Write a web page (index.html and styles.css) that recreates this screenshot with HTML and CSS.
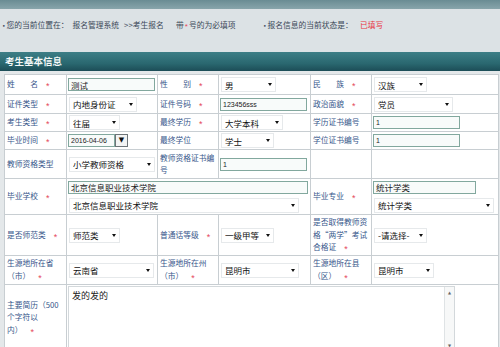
FILE: index.html
```html
<!DOCTYPE html>
<html lang="zh-CN">
<head>
<meta charset="utf-8">
<title>考生基本信息</title>
<link rel="stylesheet" href="styles.css">
</head>
<body>
<div class="topbar"></div>
<div class="crumbs">
  <span class="c1"><b class="dot">•</b>您的当前位置在：<span class="sys">报名管理系统</span><span class="sub">&gt;&gt;考生报名</span></span>
  <span class="c2">带<i class="rq sm">*</i>号的为必填项</span>
  <span class="c3"><b class="dot">•</b>报名信息的当前状态是：</span>
  <span class="state">已填写</span>
</div>
<div class="head">考生基本信息</div>
<table class="form">
  <colgroup>
    <col class="k1"><col class="v1"><col class="k2"><col class="v2"><col class="k3"><col class="v3">
  </colgroup>
  <tr class="h20">
    <th><span class="lb">姓名</span><i class="rq">*</i></th>
    <td><input class="inp w87" value="测试"></td>
    <th><span class="lb">性别</span><i class="rq">*</i></th>
    <td><span class="sel w55"><select><option>男</option></select></span></td>
    <th><span class="lb">民族</span><i class="rq">*</i></th>
    <td><span class="sel w53"><select><option>汉族</option></select></span></td>
  </tr>
  <tr class="h19">
    <th><span class="lb">证件类型</span><i class="rq">*</i></th>
    <td><span class="sel w68"><select><option>内地身份证</option></select></span></td>
    <th><span class="lb">证件号码</span><i class="rq">*</i></th>
    <td><input class="inp w87 n" value="123456sss"></td>
    <th><span class="lb">政治面貌</span><i class="rq">*</i></th>
    <td><span class="sel w79"><select><option>党员</option></select></span></td>
  </tr>
  <tr class="h18">
    <th><span class="lb">考生类型</span><i class="rq">*</i></th>
    <td><span class="sel w51"><select><option>往届</option></select></span></td>
    <th><span class="lb">最终学历</span><i class="rq">*</i></th>
    <td><span class="sel w62"><select><option>大学本科</option></select></span></td>
    <th>学历证书编号</th>
    <td><input class="inp w87 n" value="1"></td>
  </tr>
  <tr class="h18">
    <th><span class="lb">毕业时间</span><i class="rq">*</i></th>
    <td><span class="date"><input class="inp w47 n" value="2016-04-06"><span class="dbtn">▼</span></span></td>
    <th>最终学位</th>
    <td><span class="sel w53"><select><option>学士</option></select></span></td>
    <th>学位证书编号</th>
    <td><input class="inp w87 n" value="1"></td>
  </tr>
  <tr class="h29">
    <th>教师资格类型</th>
    <td><span class="sel w86"><select><option>小学教师资格</option></select></span></td>
    <th>教师资格证书编<br>号</th>
    <td><input class="inp w87 n" value="1"></td>
    <th></th>
    <td></td>
  </tr>
  <tr class="h36">
    <th><span class="lb">毕业学校</span><i class="rq">*</i></th>
    <td colspan="3">
      <div class="stack">
        <input class="inp w240" value="北京信息职业技术学院">
        <span class="sel w230"><select><option>北京信息职业技术学院</option></select></span>
      </div>
    </td>
    <th><span class="lb">毕业专业</span><i class="rq">*</i></th>
    <td>
      <div class="stack">
        <input class="inp w103" value="统计学类">
        <span class="sel w120"><select><option>统计学类</option></select></span>
      </div>
    </td>
  </tr>
  <tr class="h41">
    <th>是否师范类<i class="rq">*</i></th>
    <td><span class="sel w51"><select><option>师范类</option></select></span></td>
    <th>普通话等级<i class="rq">*</i></th>
    <td><span class="sel w53"><select><option>一级甲等</option></select></span></td>
    <th>是否取得教师资<br>格“两学”考试<br>合格证<i class="rq">*</i></th>
    <td><span class="sel w53"><select><option>-请选择-</option></select></span></td>
  </tr>
  <tr class="h29">
    <th>生源地所在省<br>（市）<i class="rq">*</i></th>
    <td><span class="sel w85"><select><option>云南省</option></select></span></td>
    <th>生源地所在州<br>（市）<i class="rq">*</i></th>
    <td><span class="sel w78"><select><option>昆明市</option></select></span></td>
    <th>生源地所在县<br>（区）<i class="rq">*</i></th>
    <td><span class="sel w60"><select><option>昆明市</option></select></span></td>
  </tr>
  <tr class="h66">
    <th>主要简历（500<br>个字符以<br>内）<i class="rq">*</i></th>
    <td colspan="5" class="tacell">
      <div class="ta">
        <textarea>发的发的</textarea>
        <div class="sb"><span class="arr">▲</span><span class="arr">▼</span></div>
      </div>
    </td>
  </tr>
</table>
</body>
</html>
```
FILE: styles.css
```css
html { overflow: hidden; }
body {
  margin: 0;
  background: #e4e8ea;
  font-family: "Noto Sans CJK SC", "Noto Sans", sans-serif;
  color: #222;
}
.topbar {
  height: 9px;
  background: linear-gradient(#6a8c93, #88a5ab);
}
.crumbs {
  display: flex;
  height: 43px;
  box-sizing: border-box;
  padding: 10px 0 0 2px;
  background: #dce2e5;
  font-size: 7.75px;
  line-height: 12px;
  color: #3b4858;
  white-space: nowrap;
}
.dot {
  font-weight: normal;
  font-family: "DejaVu Sans", sans-serif;
  font-size: 6px;
  margin-right: 1px;
}
.c1 { width: 174px; }
.sys { margin-left: 4px; }
.sub { margin-left: 5px; }
.c2 { width: 87px; }
.c3 { width: 97px; }
.state { color: #e8353e; }
.head {
  height: 19px;
  line-height: 19px;
  padding-left: 5px;
  background: linear-gradient(#3d7e86, #2a6870 60%, #1c4d57);
  color: #f4f8f8;
  font-size: 9.5px;
  font-weight: bold;
}
.form {
  margin: 3px 0 0 4px;
  width: 494px;
  table-layout: fixed;
  border-collapse: collapse;
  background: #fff;
  font-size: 8px;
  line-height: 12px;
}
.k1 { width: 62px; }
.v1 { width: 91px; }
.k2 { width: 61px; }
.v2 { width: 92px; }
.k3 { width: 61px; }
.v3 { width: 127px; }
.form th, .form td {
  border: 1px solid #c8ced2;
  vertical-align: middle;
}
.form th {
  padding: 0 1px 0 2px;
  text-align: left;
  font-weight: normal;
  font-size: 7.75px;
  line-height: 12.5px;
  color: #36568a;
  white-space: nowrap;
}
.form td {
  padding: 0 1px 0 1px;
  white-space: nowrap;
  font-size: 8px;
  line-height: 10px;
}
.h20 { height: 20px; }
.h19 { height: 19px; }
.h18 { height: 18px; }
.h29 { height: 29px; }
.h36 { height: 36px; }
.h41 { height: 41px; }
.h66 { height: 66px; }
.lb {
  display: inline-block;
  width: 31px;
  text-align-last: justify;
}
.rq {
  font-style: normal;
  font-family: "Liberation Sans", sans-serif;
  font-size: 9px;
  color: #e5475c;
  margin-left: 8px;
  vertical-align: -2px;
  line-height: 1;
}
.rq.sm { margin: 0 1px; font-size: 8px; vertical-align: -1px; }
.inp {
  box-sizing: border-box;
  height: 13px;
  margin: 0;
  padding: 0 2px;
  border: 1px solid #82a89e;
  background: #f8fbfa;
  font-family: "Noto Sans CJK SC", sans-serif;
  font-size: 8.5px;
  color: #222;
  vertical-align: middle;
  outline: none;
}
.inp.n { font-size: 7px; font-family: "Liberation Sans", sans-serif; }
.w47 { width: 47px; }
.w51 { width: 51px; }
.w53 { width: 53px; }
.w55 { width: 55px; }
.w60 { width: 60px; }
.w62 { width: 62px; }
.w68 { width: 68px; }
.w78 { width: 78px; }
.w79 { width: 79px; }
.w85 { width: 85px; }
.w86 { width: 86px; }
.w87 { width: 87px; }
.w103 { width: 103px; }
.w120 { width: 120px; }
.w230 { width: 230px; }
.w240 { width: 240px; }
.sel {
  display: inline-block;
  position: relative;
  vertical-align: middle;
  margin-left: 1px;
}
.sel select {
  -webkit-appearance: none;
  appearance: none;
  display: block;
  box-sizing: border-box;
  width: 100%;
  height: 15px;
  margin: 0;
  padding: 0 0 0 3px;
  border: 1px solid #e6e9eb;
  border-radius: 0;
  background: #fff;
  font-family: "Noto Sans CJK SC", sans-serif;
  font-size: 8.5px;
  color: #111;
}
.sel::after {
  content: "";
  position: absolute;
  right: 4px;
  top: 6px;
  border-left: 2.5px solid transparent;
  border-right: 2.5px solid transparent;
  border-top: 3px solid #111;
  pointer-events: none;
}
.date {
  display: inline-flex;
  vertical-align: middle;
}
.dbtn {
  box-sizing: border-box;
  width: 13px;
  height: 13px;
  border: 1px solid #6d7478;
  background: #f3f4f4;
  font-size: 7px;
  line-height: 11px;
  text-align: center;
  color: #111;
  font-family: "DejaVu Sans", sans-serif;
}
.stack {
  display: flex;
  flex-direction: column;
  align-items: flex-start;
  gap: 4px;
}
.stack .sel { margin-left: 1px; }
.tacell { vertical-align: top !important; padding-top: 1px !important; }
.ta {
  display: flex;
  width: 387px;
  height: 64px;
  box-sizing: border-box;
  border: 1px solid #d3d8db;
  background: #fff;
}
.ta textarea {
  flex: 1;
  border: none;
  resize: none;
  margin: 0;
  padding: 3px 3px;
  font-family: "Noto Sans CJK SC", sans-serif;
  font-size: 9px;
  line-height: 12px;
  color: #222;
  outline: none;
  overflow: hidden;
}
.sb {
  width: 9px;
  border-left: 1px solid #dfe3e5;
  background: #f7f8f8;
  display: flex;
  flex-direction: column;
  justify-content: space-between;
  align-items: center;
  padding: 3px 0 1px;
}
.arr {
  font-family: "DejaVu Sans", sans-serif;
  font-size: 4px;
  line-height: 5px;
  color: #666;
}
```
